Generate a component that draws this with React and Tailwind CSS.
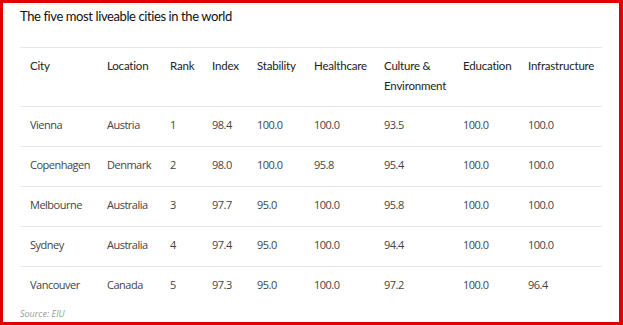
const cols = ["City", "Location", "Rank", "Index", "Stability", "Healthcare", "Culture & Environment", "Education", "Infrastructure"];

const rows = [
  ["Vienna", "Austria", "1", "98.4", "100.0", "100.0", "93.5", "100.0", "100.0"],
  ["Copenhagen", "Denmark", "2", "98.0", "100.0", "95.8", "95.4", "100.0", "100.0"],
  ["Melbourne", "Australia", "3", "97.7", "95.0", "100.0", "95.8", "100.0", "100.0"],
  ["Sydney", "Australia", "4", "97.4", "95.0", "100.0", "94.4", "100.0", "100.0"],
  ["Vancouver", "Canada", "5", "97.3", "95.0", "100.0", "97.2", "100.0", "96.4"],
];

const grid = "grid grid-cols-[87px_63px_42px_45px_57px_70px_79px_65px_74px]";

export default function App() {
  return (
    <div className="w-[623px] h-[325px] bg-white border-[#e00000] border-t-[3px] border-l-[3px] border-b-[3px] border-r-[4px] font-['Lato',sans-serif] overflow-hidden">
      <div className="pl-[17px] pr-[17px]">
        <h1 className="text-[13px] leading-[26px] text-[#111] tracking-[-0.4px]">
          The five most liveable cities in the world
        </h1>

        <div className="mt-[18px] w-[582px]">
          <div className={`${grid} border-t border-b border-[#e8e8e8] pt-[8px] pb-[10px] text-[11.5px] leading-[20px] text-[#222] tracking-[-0.2px]`}>
            {cols.map((c, i) => (
              <div key={c} className={i === 0 ? "pl-[10px]" : ""}>
                {c === "Culture & Environment" ? (
                  <>
                    Culture &amp;
                    <br />
                    Environment
                  </>
                ) : (
                  c
                )}
              </div>
            ))}
          </div>

          {rows.map((r, ri) => (
            <div
              key={r[0]}
              className={`${grid} h-[40px] items-center pb-[3px] text-[11px] text-[#444] font-['Open_Sans',sans-serif] tracking-[-0.5px] ${ri < rows.length - 1 ? "border-b border-[#e8e8e8]" : ""}`}
            >
              {r.map((v, i) => (
                <div key={i} className={i === 0 ? "pl-[10px]" : ""}>
                  {v}
                </div>
              ))}
            </div>
          ))}
        </div>

        <p className="mt-0 text-[9px] italic text-[#999] font-['Open_Sans',sans-serif]">Source: EIU</p>
      </div>
    </div>
  );
}
